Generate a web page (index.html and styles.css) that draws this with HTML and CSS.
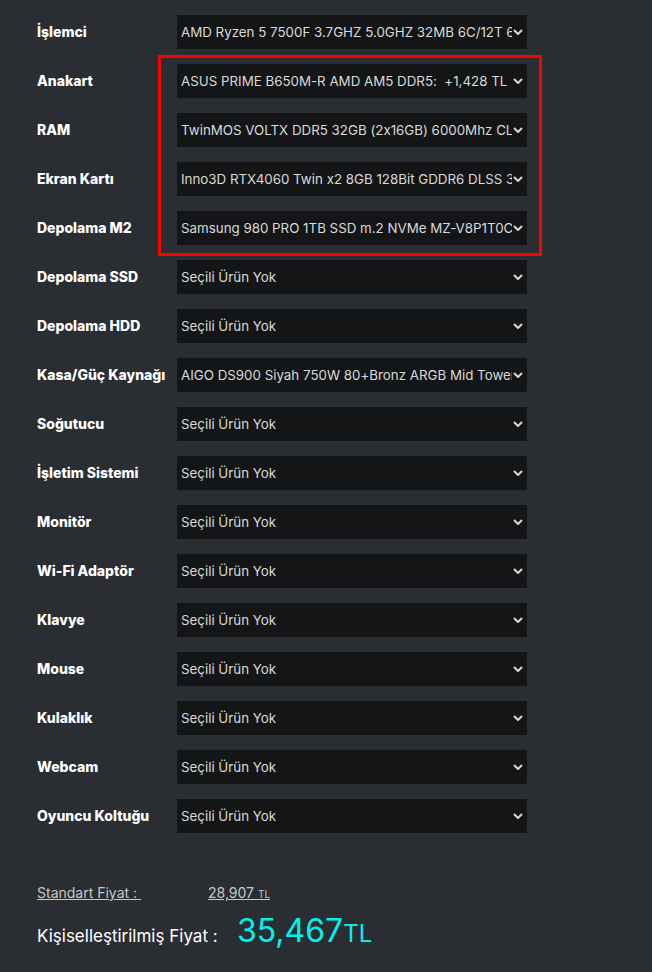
FILE: index.html
```html
<!DOCTYPE html>
<html lang="tr">
<head>
  <meta charset="UTF-8">
  <title>Sistem Toplama</title>
  <link rel="stylesheet" href="styles.css">
</head>
<body>

<div class="builder">
  <form class="parts">
    <label>İşlemci</label>
    <div class="pick">
      <select><option>AMD Ryzen 5 7500F 3.7GHZ 5.0GHZ 32MB 6C/12T 65W AM5</option></select>
      <svg viewBox="0 0 10 6"><path d="M1 1l4 4 4-4"/></svg>
    </div>

    <label>Anakart</label>
    <div class="pick">
      <select><option>ASUS PRIME B650M-R AMD AM5 DDR5:&nbsp; +1,428 TL</option></select>
      <svg viewBox="0 0 10 6"><path d="M1 1l4 4 4-4"/></svg>
    </div>

    <label>RAM</label>
    <div class="pick">
      <select><option>TwinMOS VOLTX DDR5 32GB (2x16GB) 6000Mhz CL30</option></select>
      <svg viewBox="0 0 10 6"><path d="M1 1l4 4 4-4"/></svg>
    </div>

    <label>Ekran Kartı</label>
    <div class="pick">
      <select><option>Inno3D RTX4060 Twin x2 8GB 128Bit GDDR6 DLSS 3</option></select>
      <svg viewBox="0 0 10 6"><path d="M1 1l4 4 4-4"/></svg>
    </div>

    <label>Depolama M2</label>
    <div class="pick">
      <select><option>Samsung 980 PRO 1TB SSD m.2 NVMe MZ-V8P1T0CW</option></select>
      <svg viewBox="0 0 10 6"><path d="M1 1l4 4 4-4"/></svg>
    </div>

    <label>Depolama SSD</label>
    <div class="pick">
      <select><option>Seçili Ürün Yok</option></select>
      <svg viewBox="0 0 10 6"><path d="M1 1l4 4 4-4"/></svg>
    </div>

    <label>Depolama HDD</label>
    <div class="pick">
      <select><option>Seçili Ürün Yok</option></select>
      <svg viewBox="0 0 10 6"><path d="M1 1l4 4 4-4"/></svg>
    </div>

    <label>Kasa/Güç Kaynağı</label>
    <div class="pick">
      <select><option>AIGO DS900 Siyah 750W 80+Bronz ARGB Mid Tower</option></select>
      <svg viewBox="0 0 10 6"><path d="M1 1l4 4 4-4"/></svg>
    </div>

    <label>Soğutucu</label>
    <div class="pick">
      <select><option>Seçili Ürün Yok</option></select>
      <svg viewBox="0 0 10 6"><path d="M1 1l4 4 4-4"/></svg>
    </div>

    <label>İşletim Sistemi</label>
    <div class="pick">
      <select><option>Seçili Ürün Yok</option></select>
      <svg viewBox="0 0 10 6"><path d="M1 1l4 4 4-4"/></svg>
    </div>

    <label>Monitör</label>
    <div class="pick">
      <select><option>Seçili Ürün Yok</option></select>
      <svg viewBox="0 0 10 6"><path d="M1 1l4 4 4-4"/></svg>
    </div>

    <label>Wi-Fi Adaptör</label>
    <div class="pick">
      <select><option>Seçili Ürün Yok</option></select>
      <svg viewBox="0 0 10 6"><path d="M1 1l4 4 4-4"/></svg>
    </div>

    <label>Klavye</label>
    <div class="pick">
      <select><option>Seçili Ürün Yok</option></select>
      <svg viewBox="0 0 10 6"><path d="M1 1l4 4 4-4"/></svg>
    </div>

    <label>Mouse</label>
    <div class="pick">
      <select><option>Seçili Ürün Yok</option></select>
      <svg viewBox="0 0 10 6"><path d="M1 1l4 4 4-4"/></svg>
    </div>

    <label>Kulaklık</label>
    <div class="pick">
      <select><option>Seçili Ürün Yok</option></select>
      <svg viewBox="0 0 10 6"><path d="M1 1l4 4 4-4"/></svg>
    </div>

    <label>Webcam</label>
    <div class="pick">
      <select><option>Seçili Ürün Yok</option></select>
      <svg viewBox="0 0 10 6"><path d="M1 1l4 4 4-4"/></svg>
    </div>

    <label>Oyuncu Koltuğu</label>
    <div class="pick">
      <select><option>Seçili Ürün Yok</option></select>
      <svg viewBox="0 0 10 6"><path d="M1 1l4 4 4-4"/></svg>
    </div>

    <div class="highlight"></div>
  </form>

  <div class="prices">
    <div class="std">
      <span class="std-label">Standart Fiyat :&nbsp;</span>
      <span class="std-value">28,907 <small>TL</small></span>
    </div>
    <div class="custom">
      <span class="custom-label">Kişiselleştirilmiş Fiyat :</span>
      <span class="custom-value">35,467<small>TL</small></span>
    </div>
  </div>
</div>

</body>
</html>
```

FILE: styles.css
```css
body {
  font-family: Inter, "Noto Sans", sans-serif;
  font-feature-settings: "calt" 0;
  background: #2a2d32;
  margin: 0;
  padding: 0;
}
.builder {
  padding: 15px 0 0 37px;
}
.parts {
  position: relative;
  display: grid;
  grid-template-columns: 140px 350px;
  row-gap: 15px;
  align-items: center;
}
.parts label {
  color: #fff;
  font-weight: 800;
  font-size: 14px;
  white-space: nowrap;
  margin-top: -2px;
}
.pick {
  position: relative;
  height: 34px;
}
.pick select {
  appearance: none;
  -webkit-appearance: none;
  width: 100%;
  height: 34px;
  background: #141517;
  color: #dadada;
  border: none;
  border-radius: 0;
  padding: 0 15px 0 4px;
  font-family: Inter, "Noto Sans", sans-serif;
  font-feature-settings: "calt" 0;
  font-size: 13.33px;
  outline: none;
}
.pick svg {
  position: absolute;
  right: 4px;
  top: 14px;
  width: 10px;
  height: 6px;
  fill: none;
  stroke: #d8d8d8;
  stroke-width: 2;
  pointer-events: none;
}
.highlight {
  position: absolute;
  left: 121px;
  top: 40px;
  width: 378px;
  height: 195px;
  border: 3px solid #ff0000;
  pointer-events: none;
}
.prices {
  padding-top: 51px;
}
.std {
  display: flex;
  font-size: 14px;
  color: #c8c8c8;
}
.std span {
  text-decoration: underline;
}
.std-label {
  width: 171px;
}
.std small {
  font-size: 10px;
}
.custom {
  display: flex;
  align-items: baseline;
  margin-top: 10px;
}
.custom-label {
  color: #fff;
  font-size: 17px;
  width: 200px;
}
.custom-value {
  color: #00f2ee;
  font-size: 32px;
}
.custom-value small {
  font-size: 24px;
}
```
